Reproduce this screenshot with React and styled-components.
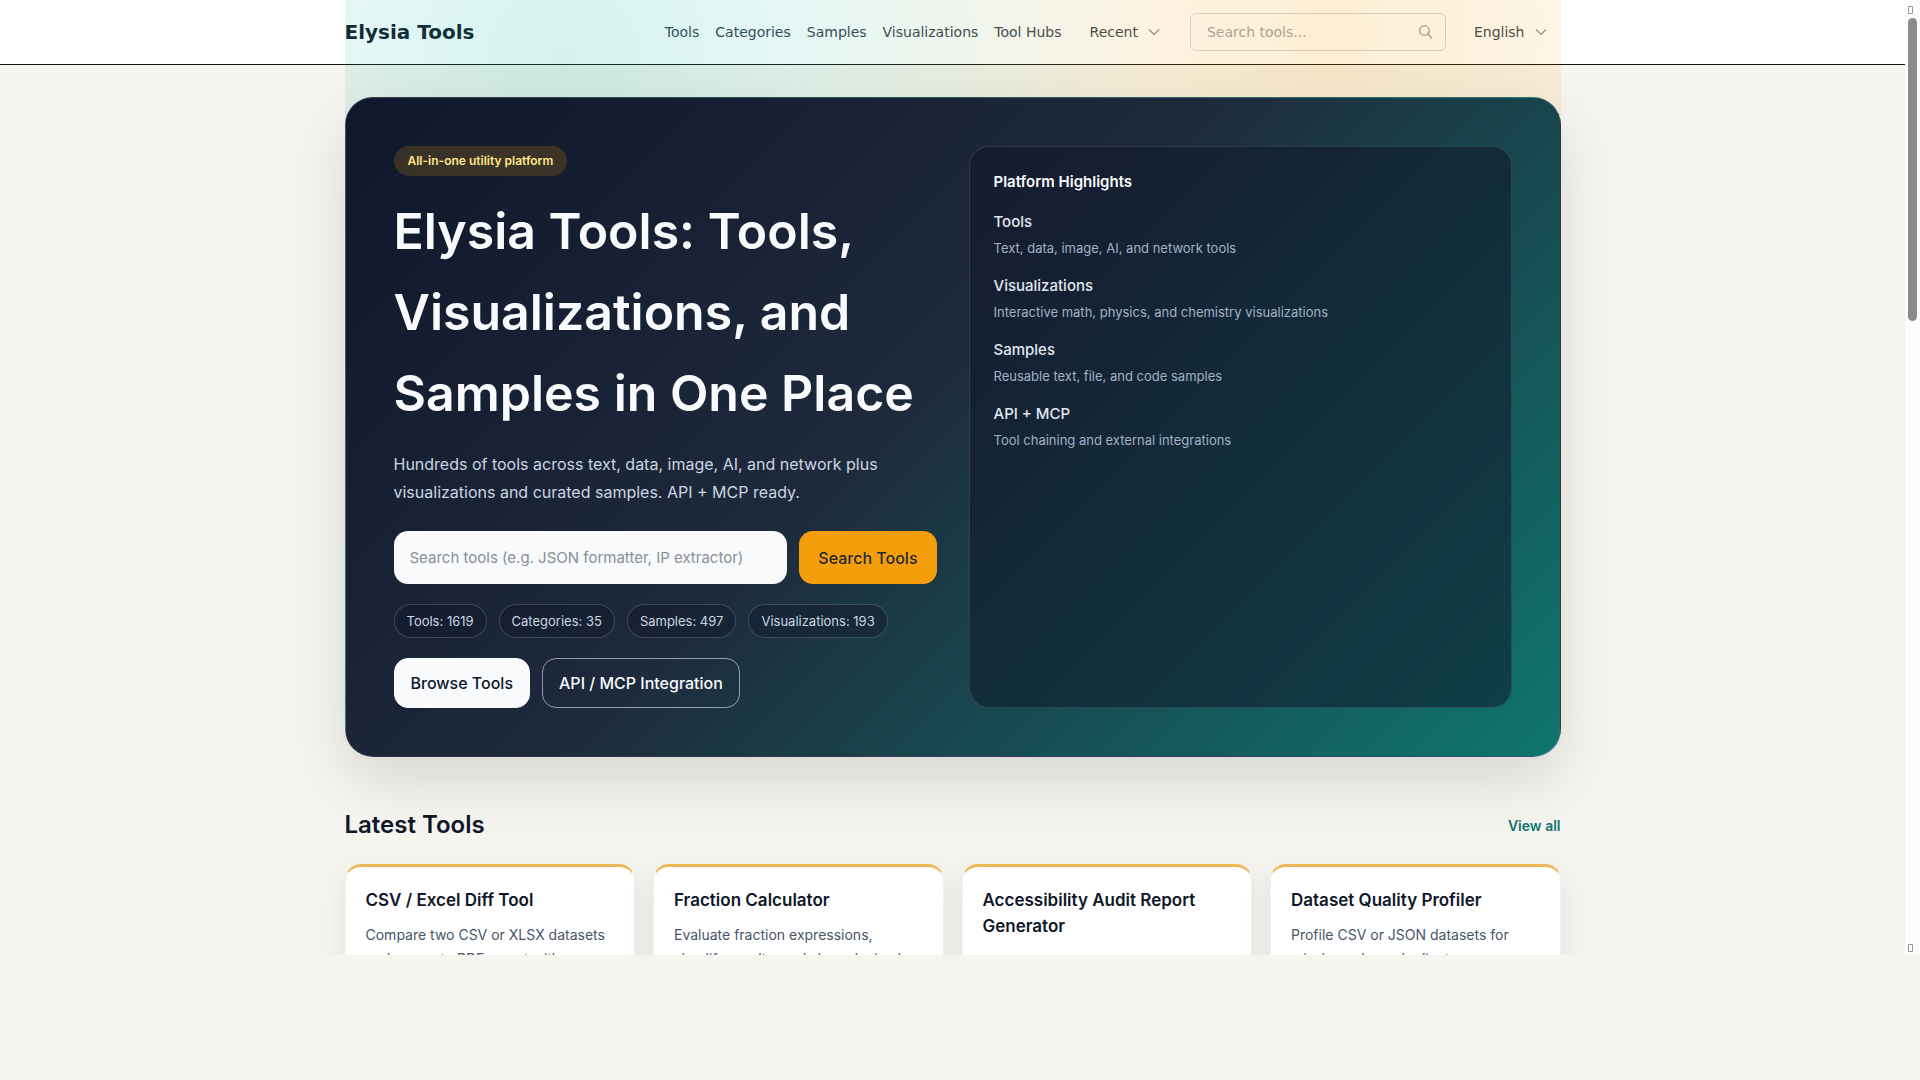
import React from "react";
import styled, { createGlobalStyle } from "styled-components";

const nav = ["Tools", "Categories", "Samples", "Visualizations", "Tool Hubs"];

const highlights = [
  { title: "Tools", text: "Text, data, image, AI, and network tools" },
  {
    title: "Visualizations",
    text: "Interactive math, physics, and chemistry visualizations",
  },
  { title: "Samples", text: "Reusable text, file, and code samples" },
  { title: "API + MCP", text: "Tool chaining and external integrations" },
];

const stats = [
  "Tools: 1619",
  "Categories: 35",
  "Samples: 497",
  "Visualizations: 193",
];

const latest = [
  {
    title: "CSV / Excel Diff Tool",
    text: "Compare two CSV or XLSX datasets and generate PDF report with",
  },
  {
    title: "Fraction Calculator",
    text: "Evaluate fraction expressions, simplify results, and show decimal",
  },
  {
    title: "Accessibility Audit Report Generator",
    text: "",
  },
  {
    title: "Dataset Quality Profiler",
    text: "Profile CSV or JSON datasets for missing values, duplicates",
  },
];

const GlobalStyle = createGlobalStyle`
  * {
    box-sizing: border-box;
  }

  body {
    margin: 0;
    background: #f5f4ee;
    color: #0f172a;
    font-family: Inter, "Liberation Sans", sans-serif;
  }

  h1, h2, h3, p, ul {
    margin: 0;
    padding: 0;
  }

  a {
    color: inherit;
    text-decoration: none;
  }

  button, input {
    font-family: inherit;
  }
`;

const Frame = styled.div`
  display: grid;
  grid-template-columns: minmax(0, 1fr) 15px;
  grid-template-rows: minmax(0, 1fr);
  height: calc(100vh - 125px);
  overflow: hidden;
`;

const Page = styled.div`
  min-width: 0;
`;

const Header = styled.header`
  background: #fff;
  border-bottom: 1px solid #111;
`;

const Container = styled.div`
  max-width: 1280px;
  margin: 0 auto;
  padding: 0 32px;
`;

const Bar = styled(Container)`
  display: flex;
  align-items: center;
  justify-content: space-between;
  height: 64px;
  font-family: "DejaVu Sans", sans-serif;
`;

const Logo = styled.a`
  font-size: 20px;
  font-weight: 700;
  color: #111827;
`;

const Nav = styled.nav`
  display: flex;
  align-items: center;
  gap: 16px;
  font-size: 14px;
  color: #374151;
`;

const Dropdown = styled.button`
  display: flex;
  align-items: center;
  gap: 8px;
  padding: 0 12px;
  border: 0;
  background: none;
  font-size: 14px;
  color: #374151;
`;

const SearchBox = styled.label`
  display: flex;
  align-items: center;
  width: 256px;
  height: 38px;
  padding: 0 12px 0 16px;
  border: 1px solid #d1d5db;
  border-radius: 6px;

  input {
    flex: 1;
    min-width: 0;
    padding: 0;
    border: 0;
    background: none;
    font-size: 14px;
  }

  input::placeholder {
    color: #9ca3af;
  }
`;

const Main = styled.main`
  position: relative;
  padding-top: 32px;
`;

/* colour wash that also covers the header */
const Glow = styled(Container)`
  position: absolute;
  top: -65px;
  left: 0;
  right: 0;
  height: 300px;
  pointer-events: none;

  &::before {
    content: "";
    display: block;
    height: 100%;
    background: radial-gradient(
        circle at 18% 20%,
        rgba(20, 184, 166, 0.18),
        transparent 600px
      ),
      radial-gradient(
        circle at 81% 10%,
        rgba(245, 158, 11, 0.18),
        transparent 540px
      );
  }
`;

const Hero = styled.section`
  position: relative;
  display: grid;
  grid-template-columns: repeat(2, minmax(0, 1fr));
  gap: 32px;
  padding: 48px;
  border: 1px solid rgba(148, 163, 184, 0.2);
  border-radius: 28px;
  background: linear-gradient(135deg, #0f172a 0%, #1e293b 45%, #0f766e 100%);
  box-shadow: 0 24px 60px rgba(17, 12, 34, 0.12);
`;

const Intro = styled.div`
  display: flex;
  flex-direction: column;
  align-items: flex-start;
`;

const Badge = styled.span`
  padding: 0 14px;
  border-radius: 15px;
  background: rgba(245, 158, 11, 0.18);
  color: #fde68a;
  font-size: 12px;
  font-weight: 600;
  line-height: 30px;
`;

const Title = styled.h1`
  margin-top: 15px;
  color: #f8fafc;
  font-size: 50px;
  font-weight: 600;
  line-height: 81px;
`;

const Lead = styled.p`
  margin-top: 16px;
  color: #cbd5e1;
  font-size: 16px;
  line-height: 28px;
`;

const SearchForm = styled.form`
  display: flex;
  align-self: stretch;
  gap: 12px;
  margin-top: 25px;
`;

const SearchInput = styled.input`
  flex: 1;
  min-width: 0;
  height: 53px;
  padding: 0 16px;
  border: 0;
  border-radius: 14px;
  background: #f8fafc;
  color: #0f172a;
  font-size: 15px;

  &::placeholder {
    color: #8a8f98;
  }
`;

const SearchButton = styled.button`
  padding: 0 19px;
  border: 0;
  border-radius: 14px;
  background: #f59e0b;
  color: #1f2937;
  font-size: 16px;
  font-weight: 500;
`;

const Stats = styled.ul`
  display: flex;
  gap: 12px;
  margin-top: 20px;
  list-style: none;
`;

const Stat = styled.li`
  padding: 0 12px;
  border: 1px solid rgba(148, 163, 184, 0.3);
  border-radius: 17px;
  background: rgba(15, 23, 42, 0.4);
  color: #cbd5e1;
  font-size: 13px;
  line-height: 32px;
`;

const Actions = styled.div`
  display: flex;
  gap: 12px;
  margin-top: 20px;
`;

const Action = styled.a`
  padding: 0 16px;
  border: 1px solid ${(p) => (p.$solid ? "#f8fafc" : "rgba(226, 232, 240, 0.6)")};
  border-radius: 14px;
  background: ${(p) => (p.$solid ? "#f8fafc" : "transparent")};
  color: ${(p) => (p.$solid ? "#0f172a" : "#f8fafc")};
  font-size: 16px;
  font-weight: 500;
  line-height: 48px;
`;

const Panel = styled.aside`
  padding: 20px 24px;
  border: 1px solid rgba(148, 163, 184, 0.2);
  border-radius: 20px;
  background: rgba(15, 23, 42, 0.55);
`;

const PanelTitle = styled.h2`
  margin-bottom: 12px;
  color: #f8fafc;
  font-size: 15px;
  font-weight: 600;
  line-height: 30px;
`;

const Highlight = styled.div`
  margin-bottom: 12px;

  h3 {
    color: #e2e8f0;
    font-size: 15px;
    font-weight: 500;
    line-height: 26px;
  }

  p {
    color: #a3b1c4;
    font-size: 13px;
    line-height: 26px;
  }
`;

const SectionHead = styled.div`
  display: flex;
  align-items: center;
  justify-content: space-between;
  margin: 48px 0 19px;

  h2 {
    font-size: 24px;
    font-weight: 600;
    line-height: 40px;
  }

  a {
    color: #0f766e;
    font-size: 14px;
    font-weight: 600;
  }
`;

const Cards = styled.div`
  display: grid;
  grid-template-columns: repeat(4, minmax(0, 1fr));
  gap: 18px;
`;

const Card = styled.a`
  padding: 20px;
  border: 1px solid rgba(148, 163, 184, 0.15);
  border-top: 3px solid #ecb959;
  border-radius: 16px;
  background: #fff;
  box-shadow: 0 10px 30px rgba(15, 23, 42, 0.08);

  h3 {
    font-size: 17px;
    font-weight: 600;
    line-height: 26px;
  }

  p {
    margin-top: 10px;
    color: #475569;
    font-size: 14px;
    line-height: 24px;
  }
`;

const Scrollbar = styled.div`
  display: flex;
  flex-direction: column;
  align-items: flex-start;
  padding: 6px 3px 3px;
  background: #fcfcfc;
`;

const Thumb = styled.div`
  width: 9px;
  height: 32%;
  margin: 4px 0 auto;
  border-radius: 5px;
  background: #8b8b8b;
`;

const Chevron = () => (
  <svg
    width="16"
    height="16"
    viewBox="0 0 16 16"
    fill="none"
    stroke="#858a93"
    strokeWidth="1.2"
  >
    <path d="M3 5.5l5 5 5-5" />
  </svg>
);

const Magnifier = () => (
  <svg
    width="16"
    height="16"
    viewBox="0 0 16 16"
    fill="none"
    stroke="#9a9da3"
    strokeWidth="1.3"
  >
    <circle cx="7.5" cy="6.5" r="4.8" />
    <path d="M11 10l4 4.5" />
  </svg>
);

const Arrow = () => (
  <svg width="5" height="8" fill="none" stroke="#999">
    <path d="M.5.5h4v7h-4z" />
  </svg>
);

const App = () => {
  return (
    <>
      <GlobalStyle />
      <Frame>
        <Page>
          <Header>
            <Bar>
              <Logo href="#">Elysia Tools</Logo>
              <Nav>
                {nav.map((item) => (
                  <a href="#" key={item}>
                    {item}
                  </a>
                ))}
                <Dropdown type="button">
                  Recent <Chevron />
                </Dropdown>
                <SearchBox>
                  <input aria-label="Search tools" placeholder="Search tools..." />
                  <Magnifier />
                </SearchBox>
                <Dropdown type="button">
                  English <Chevron />
                </Dropdown>
              </Nav>
            </Bar>
          </Header>
          <Main>
            <Glow />
            <Container>
              <Hero>
                <Intro>
                  <Badge>All-in-one utility platform</Badge>
                  <Title>
                    Elysia Tools: Tools, Visualizations, and Samples in One Place
                  </Title>
                  <Lead>
                    Hundreds of tools across text, data, image, AI, and network plus
                    visualizations and curated samples. API + MCP ready.
                  </Lead>
                  <SearchForm>
                    <SearchInput
                      aria-label="Search tools by name"
                      placeholder="Search tools (e.g. JSON formatter, IP extractor)"
                    />
                    <SearchButton type="button">Search Tools</SearchButton>
                  </SearchForm>
                  <Stats>
                    {stats.map((stat) => (
                      <Stat key={stat}>{stat}</Stat>
                    ))}
                  </Stats>
                  <Actions>
                    <Action href="#" $solid>
                      Browse Tools
                    </Action>
                    <Action href="#">API / MCP Integration</Action>
                  </Actions>
                </Intro>
                <Panel>
                  <PanelTitle>Platform Highlights</PanelTitle>
                  {highlights.map((item) => (
                    <Highlight key={item.title}>
                      <h3>{item.title}</h3>
                      <p>{item.text}</p>
                    </Highlight>
                  ))}
                </Panel>
              </Hero>
              <SectionHead>
                <h2>Latest Tools</h2>
                <a href="#">View all</a>
              </SectionHead>
              <Cards>
                {latest.map((tool) => (
                  <Card href="#" key={tool.title}>
                    <h3>{tool.title}</h3>
                    {tool.text && <p>{tool.text}</p>}
                  </Card>
                ))}
              </Cards>
            </Container>
          </Main>
        </Page>
        <Scrollbar aria-hidden="true">
          <Arrow />
          <Thumb />
          <Arrow />
        </Scrollbar>
      </Frame>
    </>
  );
};

export default App;
